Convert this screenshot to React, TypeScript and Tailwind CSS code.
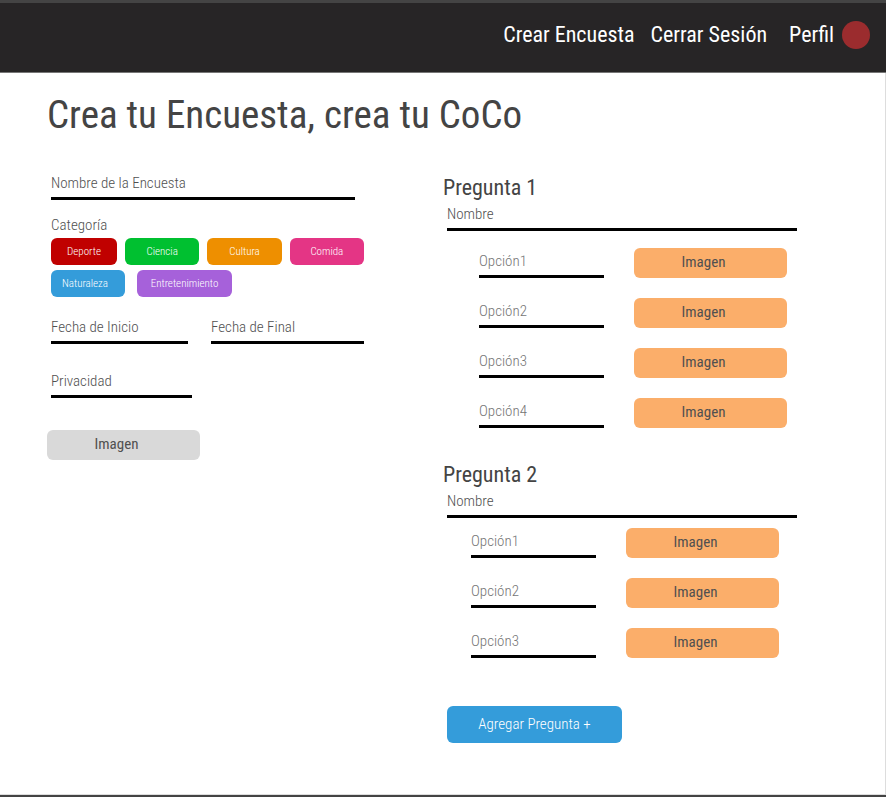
import React from "react";

const fieldStyle =
  "block h-[27px] min-w-0 rounded-none border-b-[3px] border-black bg-transparent pb-1 leading-5 font-light outline-none";

type FieldProps = { label: string; className?: string };

function Field({ label, className = "w-full text-[15px] placeholder:text-[#505050]" }: FieldProps) {
  return <input type="text" aria-label={label} placeholder={label} className={`${fieldStyle} ${className}`} />;
}

function ImageButton({ color }: { color: string }) {
  return (
    <button
      type="button"
      className={`h-[30px] w-[153px] shrink-0 rounded-md pr-3.5 pb-[3px] text-[15px] leading-5 text-[#505050] ${color}`}
    >
      Imagen
    </button>
  );
}

function Tag({ name, style }: { name: string; style: string }) {
  return (
    <button type="button" className={`h-[27px] rounded-md text-[11px] leading-4 font-light text-white ${style}`}>
      {name}
    </button>
  );
}

type QuestionProps = { title: string; options: string[]; listClass: string };

function Question({ title, options, listClass }: QuestionProps) {
  return (
    <section aria-label={title}>
      <h2 className="text-[22px] leading-7 text-[#444]">{title}</h2>
      <div className="mt-0.5 pl-1">
        <Field label="Nombre" />
      </div>
      <ul className={`flex flex-col gap-5 ${listClass}`}>
        {options.map((option) => (
          <li key={option} className="flex items-end gap-[30px]">
            <Field label={option} className="w-[125px] text-[15px] placeholder:text-[#757575]" />
            <ImageButton color="bg-[#fbae6a]" />
          </li>
        ))}
      </ul>
    </section>
  );
}

export default function App() {
  return (
    <div className="flex min-h-screen flex-col border-t-[3px] border-b-2 border-[#444] bg-white font-['Roboto_Condensed',Roboto,sans-serif]">
      <header className="flex h-[70px] items-center justify-end border-b border-[#777] bg-[#272526] pr-4 pb-1.5">
        <nav className="flex items-center text-[22px] leading-7 text-white">
          <a href="#crear" className="mr-4">Crear Encuesta</a>
          <a href="#cerrar" className="mr-[22px]">Cerrar Sesión</a>
          <a href="#perfil" className="flex items-center gap-2">
            Perfil
            <span className="size-7 rounded-full bg-[#9b2c2e]" />
          </a>
        </nav>
      </header>

      <main className="flex-1 border-r border-b border-[#ddd] pt-[18px] pr-8 pb-12 pl-[47px] md:pr-[88px]">
        <h1 className="text-[39px] leading-12 text-[#444]">Crea tu Encuesta, crea tu CoCo</h1>

        <form className="mt-[34px] grid gap-y-10 md:grid-cols-[317fr_354fr] md:gap-x-[79px]">
          <div className="min-w-0">
            <div className="pl-1">
              <div className="pr-[9px]">
                <Field label="Nombre de la Encuesta" />
              </div>

              <fieldset className="mt-[15px]">
                <legend className="text-[15px] leading-5 font-light text-[#505050]">Categoría</legend>
                <div className="mt-[3px] flex gap-2">
                  <Tag name="Deporte" style="w-[66px] bg-[#c00000]" />
                  <Tag name="Ciencia" style="flex-1 bg-[#00c030]" />
                  <Tag name="Cultura" style="flex-1 bg-[#ee8f00]" />
                  <Tag name="Comida" style="flex-1 bg-[#e43585]" />
                </div>
                <div className="mt-[5px] flex gap-3">
                  <Tag name="Naturaleza" style="w-[74px] pr-1.5 bg-[#349cda]" />
                  <Tag name="Entretenimiento" style="w-[95px] bg-[#a661da]" />
                </div>
              </fieldset>

              <div className="mt-5 flex gap-[23px]">
                <Field label="Fecha de Inicio" className="w-[137px] text-[15px] placeholder:text-[#505050]" />
                <Field label="Fecha de Final" className="flex-1 text-[15px] placeholder:text-[#505050]" />
              </div>

              <div className="mt-[27px]">
                <Field label="Privacidad" className="w-[141px] text-[15px] placeholder:text-[#505050]" />
              </div>
            </div>

            <div className="mt-8">
              <ImageButton color="bg-[#d9d9d9]" />
            </div>
          </div>

          <div className="min-w-0 pt-px">
            <Question
              title="Pregunta 1"
              options={["Opción1", "Opción2", "Opción3", "Opción4"]}
              listClass="mt-[17px] pl-9"
            />
            <div className="mt-[33px]">
              <Question title="Pregunta 2" options={["Opción1", "Opción2", "Opción3"]} listClass="mt-2.5 pl-7" />
            </div>
            <div className="mt-12 pl-1">
              <button
                type="button"
                className="h-[37px] w-[175px] rounded-md bg-[#349cda] pb-0.5 text-[15px] leading-5 font-light text-white"
              >
                Agregar Pregunta +
              </button>
            </div>
          </div>
        </form>
      </main>
    </div>
  );
}
